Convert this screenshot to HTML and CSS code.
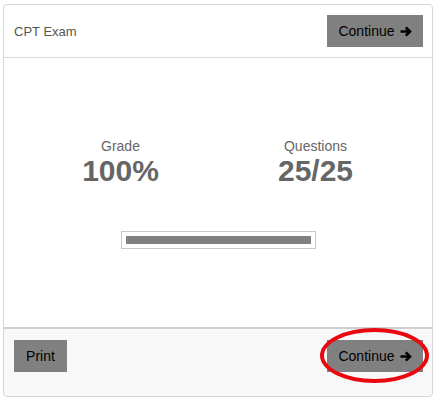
FILE: index.html
```
<!DOCTYPE html>
<html lang="en">

<head>
    <meta charset="UTF-8">
    <meta name="viewport" content="width=device-width, initial-scale=1.0">
    <title>CPT Exam</title>
    <link rel="stylesheet" href="styles.css">
</head>

<body>
    <div class="card">
        <div class="cardHeader">
            <span class="title">CPT Exam</span>
            <button type="button" class="btn btnContinue">Continue
                <svg class="arrow" width="12" height="11" viewBox="0 0 12 11">
                    <path d="M0.5 5.5H10M5.8 1.3L10 5.5L5.8 9.7" fill="none" stroke="#000" stroke-width="2.6" />
                </svg>
            </button>
        </div>
        <div class="cardBody">
            <div class="stats">
                <div class="stat">
                    <div class="label">Grade</div>
                    <div class="value">100%</div>
                </div>
                <div class="stat">
                    <div class="label">Questions</div>
                    <div class="value">25/25</div>
                </div>
            </div>
            <div class="progress">
                <div class="progressBar" style="width: 100%"></div>
            </div>
        </div>
        <div class="cardFooter">
            <button type="button" class="btn btnPrint">Print</button>
            <div class="highlightWrap">
                <button type="button" class="btn btnContinue">Continue
                    <svg class="arrow" width="12" height="11" viewBox="0 0 12 11">
                        <path d="M0.5 5.5H10M5.8 1.3L10 5.5L5.8 9.7" fill="none" stroke="#000" stroke-width="2.6" />
                    </svg>
                </button>
                <div class="circle"></div>
            </div>
        </div>
    </div>
</body>

</html>
```

FILE: styles.css
```
body {
    margin: 0;
    background: #fff;
    font-family: "Liberation Sans", Arial, sans-serif;
}

.card {
    margin: 4px 0 0 3px;
    width: 428px;
    height: 391px;
    border: 1px solid #d6d6d6;
    border-radius: 4px;
    display: flex;
    flex-direction: column;
}

.cardHeader {
    display: flex;
    align-items: center;
    justify-content: space-between;
    height: 52px;
    padding: 0 9px 0 10px;
    border-bottom: 1px solid #d9d9d9;
}

.title {
    font-size: 13px;
    color: #555;
}

.btn {
    border: 0;
    border-radius: 0;
    background: #808080;
    color: #000;
    height: 32px;
    font: 14px "Liberation Sans", Arial, sans-serif;
    display: flex;
    align-items: center;
    justify-content: center;
    gap: 5px;
    padding: 0;
}

.btnContinue {
    width: 96px;
}

.btnPrint {
    width: 53px;
}

.arrow {
    margin-top: 1px;
}

.cardBody {
    flex: 1;
    display: flex;
    flex-direction: column;
    align-items: center;
    padding-top: 80px;
}

.stats {
    display: flex;
    width: 390px;
}

.stat {
    flex: 1;
    text-align: center;
    color: #666;
}

.label {
    font-size: 14px;
    line-height: 16px;
}

.value {
    font-size: 30px;
    font-weight: bold;
    line-height: 34px;
}

.progress {
    margin-top: 43px;
    width: 185px;
    height: 8px;
    padding: 4px;
    border: 1px solid #c8c8c8;
}

.progressBar {
    height: 100%;
    background: #808080;
}

.cardFooter {
    height: 56px;
    padding: 11px 9px 0 10px;
    border-top: 2px solid #cfcfcf;
    background: #f8f8f8;
    display: flex;
    justify-content: space-between;
    align-items: flex-start;
    border-radius: 0 0 4px 4px;
}

.highlightWrap {
    position: relative;
}

.circle {
    position: absolute;
    left: -7px;
    top: -12px;
    width: 101px;
    height: 47px;
    border: 4.5px solid #e8080e;
    border-radius: 50%;
}
```
